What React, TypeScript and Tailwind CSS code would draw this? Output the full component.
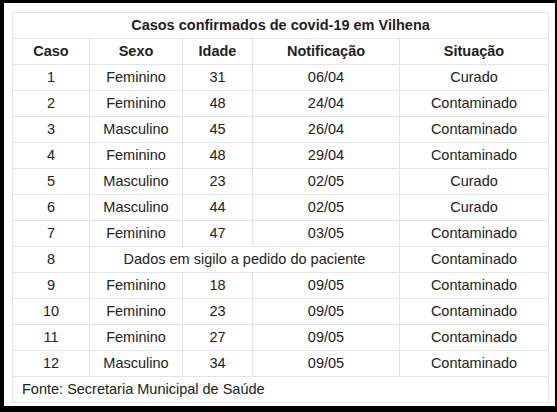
const rows: [string, string, string, string, string][] = [
  ["1", "Feminino", "31", "06/04", "Curado"],
  ["2", "Feminino", "48", "24/04", "Contaminado"],
  ["3", "Masculino", "45", "26/04", "Contaminado"],
  ["4", "Feminino", "48", "29/04", "Contaminado"],
  ["5", "Masculino", "23", "02/05", "Curado"],
  ["6", "Masculino", "44", "02/05", "Curado"],
  ["7", "Feminino", "47", "03/05", "Contaminado"],
  ["8", "", "", "", "Contaminado"],
  ["9", "Feminino", "18", "09/05", "Contaminado"],
  ["10", "Feminino", "23", "09/05", "Contaminado"],
  ["11", "Feminino", "27", "09/05", "Contaminado"],
  ["12", "Masculino", "34", "09/05", "Contaminado"],
];

const cell = "border border-[#e4e4e4] h-[26px] p-0 text-center align-middle";

export default function App() {
  return (
    <div className="h-[412px] w-[557px] bg-black pt-[3px] pl-[4px]">
      <div
        className="w-[551px] h-[403px] bg-white pt-[9px] pl-[8px] text-[14.5px] text-[#222]"
        style={{ fontFamily: '"Liberation Sans", Arial, sans-serif' }}
      >
        <table className="table-fixed border-collapse w-[536px] leading-none">
          <colgroup>
            <col className="w-[77px]" />
            <col className="w-[93px]" />
            <col className="w-[70px]" />
            <col className="w-[147px]" />
            <col className="w-[149px]" />
          </colgroup>
          <thead>
            <tr>
              <th colSpan={5} className={`${cell} font-bold`}>
                Casos confirmados de covid-19 em Vilhena
              </th>
            </tr>
            <tr>
              <th className={`${cell} font-bold`}>Caso</th>
              <th className={`${cell} font-bold`}>Sexo</th>
              <th className={`${cell} font-bold`}>Idade</th>
              <th className={`${cell} font-bold`}>Notificação</th>
              <th className={`${cell} font-bold`}>Situação</th>
            </tr>
          </thead>
          <tbody>
            {rows.map((r) =>
              r[0] === "8" ? (
                <tr key={r[0]}>
                  <td className={cell}>{r[0]}</td>
                  <td colSpan={3} className={cell}>
                    Dados em sigilo a pedido do paciente
                  </td>
                  <td className={cell}>{r[4]}</td>
                </tr>
              ) : (
                <tr key={r[0]}>
                  {r.map((v, i) => (
                    <td key={i} className={cell}>
                      {v}
                    </td>
                  ))}
                </tr>
              ),
            )}
            <tr>
              <td colSpan={5} className={`${cell} text-left pl-[9px]`}>
                Fonte: Secretaria Municipal de Saúde
              </td>
            </tr>
          </tbody>
        </table>
      </div>
    </div>
  );
}
